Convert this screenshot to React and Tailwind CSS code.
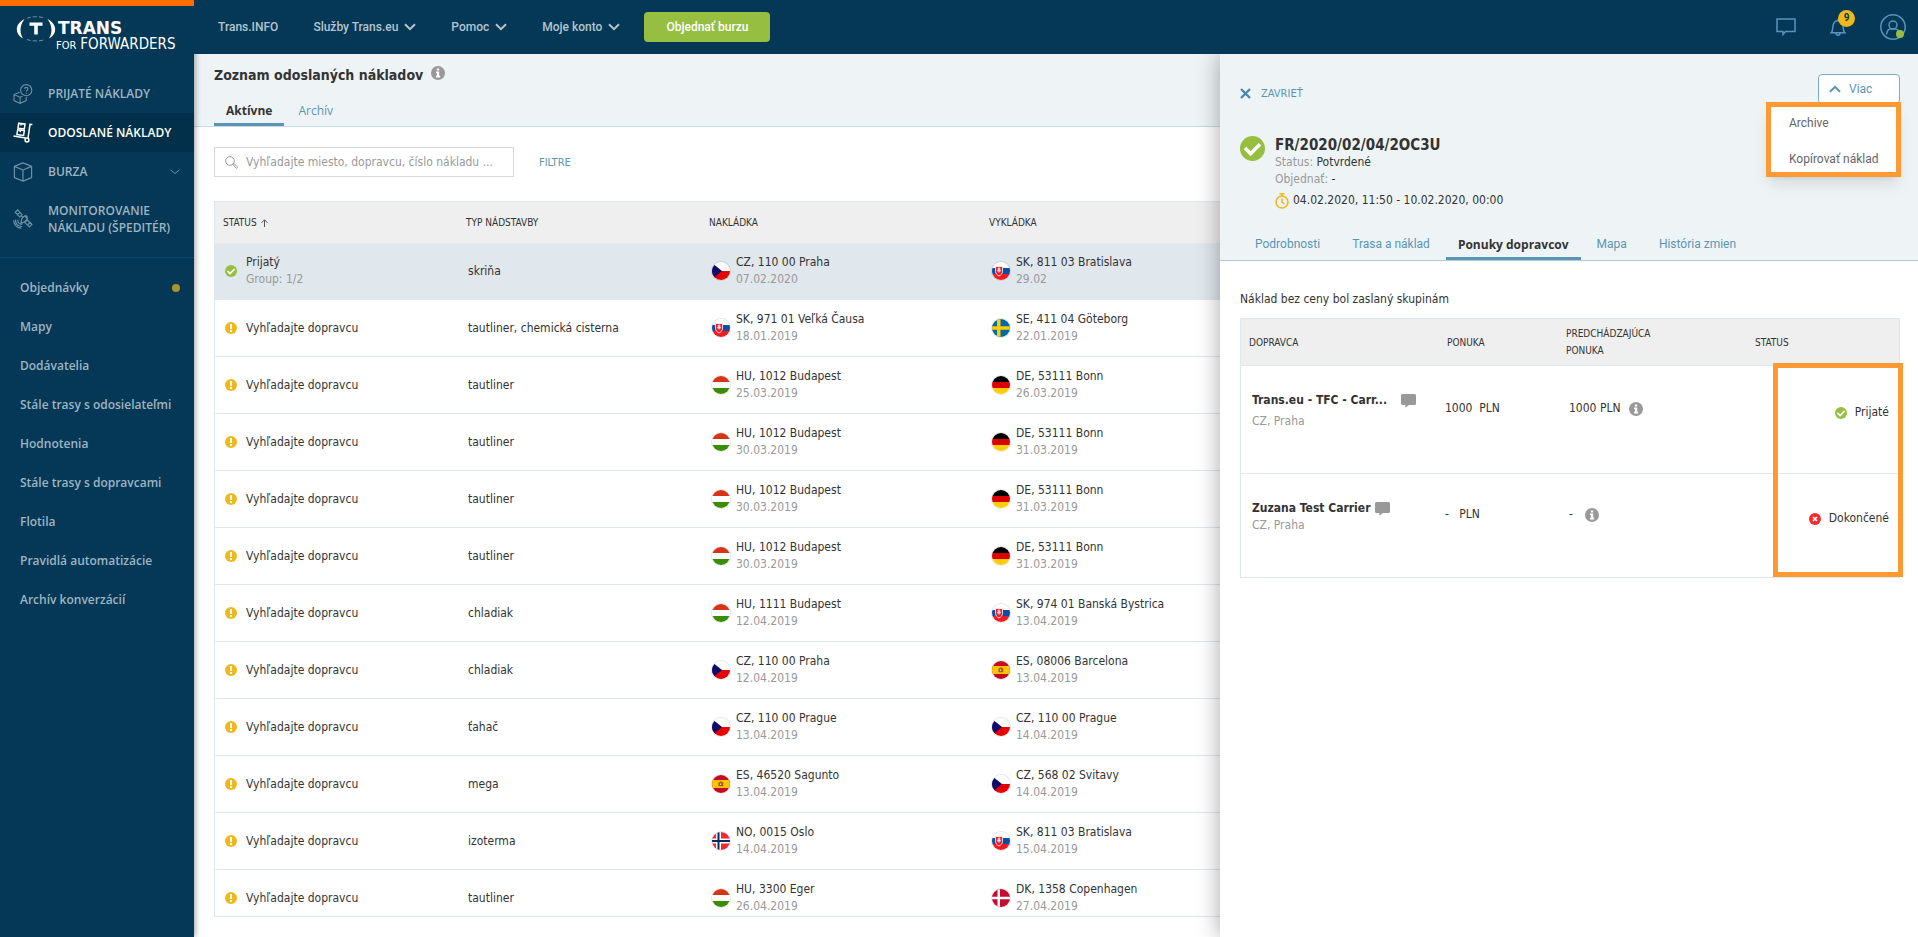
import clsx from 'clsx'

const mainMenu = [
  { label: 'PRIJATÉ NÁKLADY', icon: RequestIcon },
  { label: 'ODOSLANÉ NÁKLADY', icon: TruckIcon, active: true },
  { label: 'BURZA', icon: BoxIcon, expandable: true },
  { label: 'MONITOROVANIE NÁKLADU (ŠPEDITÉR)', icon: SatelliteIcon },
]

const subMenu = [
  { label: 'Objednávky', dot: true },
  { label: 'Mapy' },
  { label: 'Dodávatelia' },
  { label: 'Stále trasy s odosielateľmi' },
  { label: 'Hodnotenia' },
  { label: 'Stále trasy s dopravcami' },
  { label: 'Flotila' },
  { label: 'Pravidlá automatizácie' },
  { label: 'Archív konverzácií' },
]

const freights = [
  { status: 'Prijatý', group: 'Group: 1/2', body: 'skriňa', from: ['CZ', '110 00 Praha', '07.02.2020'], to: ['SK', '811 03 Bratislava', '29.02'] },
  { body: 'tautliner, chemická cisterna', from: ['SK', '971 01 Veľká Čausa', '18.01.2019'], to: ['SE', '411 04 Göteborg', '22.01.2019'] },
  { body: 'tautliner', from: ['HU', '1012 Budapest', '25.03.2019'], to: ['DE', '53111 Bonn', '26.03.2019'] },
  { body: 'tautliner', from: ['HU', '1012 Budapest', '30.03.2019'], to: ['DE', '53111 Bonn', '31.03.2019'] },
  { body: 'tautliner', from: ['HU', '1012 Budapest', '30.03.2019'], to: ['DE', '53111 Bonn', '31.03.2019'] },
  { body: 'tautliner', from: ['HU', '1012 Budapest', '30.03.2019'], to: ['DE', '53111 Bonn', '31.03.2019'] },
  { body: 'chladiak', from: ['HU', '1111 Budapest', '12.04.2019'], to: ['SK', '974 01 Banská Bystrica', '13.04.2019'] },
  { body: 'chladiak', from: ['CZ', '110 00 Praha', '12.04.2019'], to: ['ES', '08006 Barcelona', '13.04.2019'] },
  { body: 'ťahač', from: ['CZ', '110 00 Prague', '13.04.2019'], to: ['CZ', '110 00 Prague', '14.04.2019'] },
  { body: 'mega', from: ['ES', '46520 Sagunto', '13.04.2019'], to: ['CZ', '568 02 Svitavy', '14.04.2019'] },
  { body: 'izoterma', from: ['NO', '0015 Oslo', '14.04.2019'], to: ['SK', '811 03 Bratislava', '15.04.2019'] },
  { body: 'tautliner', from: ['HU', '3300 Eger', '26.04.2019'], to: ['DK', '1358 Copenhagen', '27.04.2019'] },
]

const detailTabs = ['Podrobnosti', 'Trasa a náklad', 'Ponuky dopravcov', 'Mapa', 'História zmien']

function RequestIcon() {
  return (
    <svg width="20" height="20" viewBox="0 0 20 20" fill="none" stroke="currentColor" strokeWidth="1.1">
      <circle cx="13.2" cy="6.2" r="5.6" />
      <path d="M11.6 5c0-2.2 3.3-2.2 3.3 0 0 1.2-1.6 1.3-1.6 2.7M13.3 8.7v1" />
      <path d="M6.6 8.2 1 10.6v6l6.1 2.8 6.1-2.8v-3.5M1 10.6l6.1 2.7v6M7.1 13.3l2.4-1.1" />
    </svg>
  )
}

function TruckIcon() {
  return (
    <svg width="20" height="21" viewBox="0 0 20 21" fill="none" stroke="currentColor" strokeWidth="1.5">
      <path d="M5.7 1.2 12 2l-.7 5-6.3-.8zM4.7 7.7l6.6.9-.7 4.9-6.7-.9zM8 1.6l-.2 1.9M7.4 8.2l-.2 1.9" />
      <path d="M19.4 2.6 17 2.3 15 16M.5 14l12.2 2" />
      <circle cx="14" cy="18" r="1.9" />
    </svg>
  )
}

function BoxIcon() {
  return (
    <svg width="20" height="20" viewBox="0 0 20 20" fill="none" stroke="currentColor" strokeWidth="1.2" strokeLinejoin="round">
      <path d="M10 .9 18.6 4.4v11.2L10 19.1 1.4 15.6V4.4zM1.4 4.4 10 8l8.6-3.6M10 8v11" />
    </svg>
  )
}

function SatelliteIcon() {
  return (
    <svg width="20" height="20" viewBox="0 0 20 20" fill="none" stroke="currentColor" strokeWidth="1.2">
      <path d="m2.2 3.2 2.5-2.4 4.4 4.8-2.4 2.3zM3.8 5.8l3.4-2.4M11.5 13.2l2.4-2.5 5 4.6-2.5 2.7zM14.7 16l2.3-2.6" />
      <path d="m8.6 9.8 2.9-3 3 3-2.9 3-3.6 1.6zM8.2 6.8l1.6 1.5M12.8 11.6l.9.8M12.6 6.2l2.1 2.2" />
      <path d="M4.8 10.6c-.2 3 1.6 4.7 4.4 4.7M2.5 10.6c-.3 4.3 2.4 6.9 6.6 6.9M.6 11.2c.2 4.4 3.6 7.9 7.8 8" />
    </svg>
  )
}

function InfoIcon() {
  return (
    <svg width="14" height="14" viewBox="0 0 14 14" className="shrink-0" aria-label="Info">
      <circle cx="7" cy="7" r="7" fill="#999" />
      <path d="M5.8 2.4h2.4v2H5.8zM5 5.6h3.2v4.2h1v1.6H5V9.8h1V7.2H5z" fill="#fff" />
    </svg>
  )
}

function CheckIcon({ size }) {
  return (
    <svg width={size} height={size} viewBox="0 0 24 24" className="shrink-0">
      <circle cx="12" cy="12" r="12" fill="#96be41" />
      <path d="m4.8 11.6 5.4 5.4 9-9" fill="none" stroke="#fff" strokeWidth="3.4" />
    </svg>
  )
}

function WarnIcon() {
  return (
    <svg width="12" height="12" viewBox="0 0 12 12" className="shrink-0">
      <circle cx="6" cy="6" r="6" fill="#f0b81b" />
      <path d="M5 2h2v5H5zM5 8h2v2H5z" fill="#fff" />
    </svg>
  )
}

function CrossIcon() {
  return (
    <svg width="12" height="12" viewBox="0 0 12 12" className="shrink-0">
      <circle cx="6" cy="6" r="6" fill="#f9292d" />
      <path d="m4 4 4 4m0-4L4 8" stroke="#fff" strokeWidth="1.7" />
    </svg>
  )
}

function ChatIcon() {
  return (
    <svg width="15" height="14" viewBox="0 0 15 14" className="shrink-0" fill="#999">
      <path d="M1.5 0h12A1.5 1.5 0 0 1 15 1.5v8a1.5 1.5 0 0 1-1.5 1.5H8l-3.6 2.7V11H1.5A1.5 1.5 0 0 1 0 9.5v-8A1.5 1.5 0 0 1 1.5 0z" />
    </svg>
  )
}

function Chevron({ up }) {
  return (
    <svg width="12" height="8" viewBox="0 0 12 8" fill="none" stroke="currentColor" strokeWidth="2" className={clsx(up && 'rotate-180')}>
      <path d="m1 1.2 5 5 5-5" />
    </svg>
  )
}

const flagArt = {
  CZ: (
    <>
      <path d="M0 0h18v9H0z" fill="#fff" />
      <path d="M0 9h18v9H0z" fill="#e60000" />
      <path d="M0 1v16l10-8z" fill="#0c0c6b" />
    </>
  ),
  SK: (
    <>
      <path d="M0 0h18v6H0z" fill="#fff" />
      <path d="M0 6h18v6H0z" fill="#0b4ea2" />
      <path d="M0 12h18v6H0z" fill="#ee1c25" />
      <path d="M3.5 4.5h7v5c0 2-1.5 3.5-3.5 4.5-2-1-3.5-2.500-3.500-4.500z" fill="#ee1c25" stroke="#fff" strokeWidth=".8" />
      <path d="M7 5.5v5M5.5 7h3M5 8.8h4" stroke="#fff" />
    </>
  ),
  SE: (
    <>
      <path d="M0 0h18v18H0z" fill="#006aa7" />
      <path d="M5 0h3.5v18H5zM0 7.2h18v3.6H0z" fill="#fecc00" />
    </>
  ),
  HU: (
    <>
      <path d="M0 0h18v6H0z" fill="#d43516" />
      <path d="M0 6h18v6H0z" fill="#fff" />
      <path d="M0 12h18v6H0z" fill="#388d00" />
    </>
  ),
  DE: (
    <>
      <path d="M0 0h18v6H0z" fill="#000" />
      <path d="M0 6h18v6H0z" fill="#d00" />
      <path d="M0 12h18v6H0z" fill="#ffce00" />
    </>
  ),
  ES: (
    <>
      <path d="M0 0h18v18H0z" fill="#c60b1e" />
      <path d="M0 5h18v8H0z" fill="#ffc400" />
      <path d="M6.5 7.5 9 6.2l2.3 1.3v3.8H6.5z" fill="#ad5a2b" />
      <path d="M8 8.5h1.200V10H8z" fill="#f3d9a0" />
    </>
  ),
  NO: (
    <>
      <path d="M0 0h18v18H0z" fill="#ef2b2d" />
      <path d="M4 0h5v18H4zM0 6.5h18v5H0z" fill="#fff" />
      <path d="M5.5 0h2v18h-2zM0 8h18v2H0z" fill="#002868" />
    </>
  ),
  DK: (
    <>
      <path d="M0 0h18v18H0z" fill="#c60c30" />
      <path d="M5.5 0H8v18H5.500zM0 7.8h18v2.4H0z" fill="#fff" />
    </>
  ),
}

function Flag({ code }) {
  return (
    <svg width="18" height="18" viewBox="0 0 18 18" className="shrink-0 rounded-full ring-1 ring-black/10">
      {flagArt[code]}
    </svg>
  )
}

function Place({ place }) {
  const [code, address, date] = place
  return (
    <div className="flex items-center gap-1.5 pl-px">
      <Flag code={code} />
      <div>
        <div>{code}, {address}</div>
        <div className="text-[#999]">{date}</div>
      </div>
    </div>
  )
}

function Logo() {
  return (
    <a href="#" className="mt-2.5 ml-4 flex h-[58px] items-start font-normal text-white">
      <svg width="40" height="26" viewBox="0 0 40 26" fill="#fff" className="shrink-0">
        <path d="M8.5 3C-1.5 8-1.5 18 7 22.600 3.5 17 3.5 9.5 8.5 3z" />
        <path d="M31.5 3c10 5 10 15 1.5 19.600C36.5 17 36.5 9.5 31.5 3z" />
        <path d="M11 2.200C16 .2 24 .2 29 2.200M11 23.600c5 1.800 13 1.800 18 0" fill="none" stroke="#8aa5b6" strokeWidth=".8" strokeDasharray="4 2" />
        <path d="M13.5 6.5h13v3.2h-4.700v8.800h-3.600V9.700h-4.700z" />
      </svg>
      <div className="pt-[3px] font-['DejaVu_Sans']">
        <div className="pl-0.5 text-[17px] leading-[18px] font-bold">TRANS</div>
        <div className="flex items-baseline gap-1 font-['DejaVu_Sans_Condensed'] leading-[15px]">
          <span className="text-[11px]">FOR</span>
          <span className="text-[15px]">FORWARDERS</span>
        </div>
      </div>
    </a>
  )
}

function Sidebar() {
  return (
    <aside className="z-10 w-[194px] shrink-0 border-t-6 border-[#ff6c00] bg-[#043856] font-['Open_Sans'] text-xs font-semibold text-[#9fb4c1] shadow-[1px_0_6px_rgba(0,0,0,0.4)]">
      <Logo />
      <nav className="border-b border-[#0b4a6e] pb-2.5 leading-[17px]">
        {mainMenu.map(({ label, icon: Icon, active, expandable }) => (
          <a
            key={label}
            href="#"
            className={clsx('flex min-h-[39px] items-center gap-[15px] py-[9px] pl-[13px]', active && 'bg-[#022f4a] text-white')}
          >
            <span className={clsx('shrink-0', !active && 'text-[#6d8fa4]')}><Icon /></span>
            <span className="flex-1 py-0.5">{label}</span>
            {expandable && (
              <svg width="10" height="6" viewBox="0 0 10 6" fill="none" stroke="#6d8fa4" className="mr-3.5">
                <path d="m.5.8 4.5 3.7L9.5.8" />
              </svg>
            )}
          </a>
        ))}
      </nav>
      <nav className="pt-2.5">
        {subMenu.map(({ label, dot }) => (
          <a key={label} href="#" className="flex h-[39px] items-center justify-between pr-3.5 pl-5">
            {label}
            {dot && <span className="size-2 rounded-full bg-[#a8962c]" />}
          </a>
        ))}
      </nav>
    </aside>
  )
}

function TopBar() {
  return (
    <header className="z-20 flex h-[54px] shrink-0 items-center bg-[#043856] pr-3 pl-6 font-['Roboto'] text-xs font-medium text-[#b4c4ce]">
      <nav className="flex items-center gap-[35px]">
        <a href="#">Trans.INFO</a>
        {['Služby Trans.eu', 'Pomoc', 'Moje konto'].map((label) => (
          <button key={label} className="flex items-center gap-1.5">
            {label}
            <Chevron />
          </button>
        ))}
      </nav>
      <button className="ml-6 h-[30px] w-[126px] rounded bg-[#96be41] text-white">Objednať burzu</button>
      <div className="ml-auto flex items-center gap-[34px] text-[#5a94ba]">
        <button aria-label="Správy">
          <svg width="20" height="18" viewBox="0 0 20 18" fill="none" stroke="currentColor" strokeWidth="1.5">
            <path d="M1 1h18v12.5H9.5L7 16.5v-3H1z" />
          </svg>
        </button>
        <button aria-label="Upozornenia" className="relative">
          <svg width="16" height="19" viewBox="0 0 16 19" fill="none" stroke="currentColor" strokeWidth="1.5">
            <path d="M1 14.8c2-1.5 1.5-4 2-7 .5-3 2-5 5-5s4.5 2 5 5c.5 3 0 5.5 2 7zM6 15c0 3 4 3 4 0M8 2.5V1" />
          </svg>
          <span className="absolute -top-2 left-2 flex size-[17px] items-center justify-center rounded-full bg-[#f0b81b] text-[10px] font-bold text-[#043856]">9</span>
        </button>
        <button aria-label="Profil" className="relative">
          <svg width="26" height="26" viewBox="0 0 26 26" fill="none" stroke="currentColor" strokeWidth="1.5">
            <circle cx="13" cy="13" r="12.2" />
            <circle cx="13" cy="11" r="4" />
            <path d="M6.5 20.5c.5-3.5 2.5-5.5 4-5.5h5c1.5 0 3.5 2 4 5.5" />
          </svg>
          <span className="absolute right-0.5 bottom-0.5 size-2 rounded-full bg-[#96be41]" />
        </button>
      </div>
    </header>
  )
}

function FreightList() {
  return (
    <main className="flex min-w-0 flex-1 flex-col overflow-hidden">
      <div className="border-b border-[#c6dbe6] bg-[#eef4f6] pt-3 pl-5">
        <div className="flex items-start gap-2">
          <h1 className="text-sm leading-[18px] font-bold">Zoznam odoslaných nákladov</h1>
          <InfoIcon />
        </div>
        <div className="mt-3.5 flex gap-0.5 font-['Open_Sans']">
          <a href="#" className="border-b-3 border-[#5b94b5] px-3 py-1 font-bold">Aktívne</a>
          <a href="#" className="px-3 py-1 text-[#5b94b5]">Archív</a>
        </div>
      </div>

      <div className="flex items-center gap-[25px] pt-5 pb-6 pl-5">
        <label className="flex h-[30px] w-[300px] items-center gap-2 border border-[#d8d8d8] pl-2.5">
          <svg width="13" height="13" viewBox="0 0 13 13" fill="none" stroke="#999">
            <circle cx="5" cy="5" r="4.3" />
            <path d="m8 8.5 1.2-.8 3 3a.9.9 0 0 1-1.3 1.3z" />
          </svg>
          <input
            type="text"
            aria-label="Vyhľadávanie"
            placeholder="Vyhľadajte miesto, dopravcu, číslo nákladu ..."
            className="min-w-0 flex-1 outline-none placeholder:text-[#999]"
          />
        </label>
        <a href="#" className="text-[11px] text-[#5b94b5]">FILTRE</a>
      </div>

      <div className="mb-5 ml-5 min-h-0 flex-1 overflow-hidden border-y border-l border-[#e0e7ed]">
        <table className="w-full table-fixed border-separate border-spacing-0 text-left">
          <colgroup>
            <col className="w-[243px]" />
            <col className="w-[243px]" />
            <col className="w-[280px]" />
            <col />
          </colgroup>
          <thead>
            <tr className="h-[41px] bg-[#efefef] text-[10px]">
              <th className="pl-2 font-normal">
                <span className="flex items-center gap-1">
                  STATUS
                  <svg width="7" height="8" viewBox="0 0 7 8" fill="none" stroke="#555">
                    <path d="M3.5 8V1M.5 3.800l3-3 3 3" />
                  </svg>
                </span>
              </th>
              <th className="pl-2 font-normal">TYP NÁDSTAVBY</th>
              <th className="pl-2 font-normal">NAKLÁDKA</th>
              <th className="pl-2 font-normal">VYKLÁDKA</th>
            </tr>
          </thead>
          <tbody>
            {freights.map((row, i) => (
              <tr key={i} className={clsx('h-[57px] *:border-b *:border-[#e0e7ed] *:pl-2.5', row.group && 'bg-[#e0e7ed]')}>
                <td>
                  <div className="flex items-center gap-[9px]">
                    {row.group ? <CheckIcon size={12} /> : <WarnIcon />}
                    <div>
                      <div>{row.status || 'Vyhľadajte dopravcu'}</div>
                      {row.group && <div className="text-[#999]">{row.group}</div>}
                    </div>
                  </div>
                </td>
                <td>{row.body}</td>
                <td><Place place={row.from} /></td>
                <td><Place place={row.to} /></td>
              </tr>
            ))}
          </tbody>
        </table>
      </div>
    </main>
  )
}

function MoreMenu() {
  return (
    <div className="relative font-['Roboto']">
      <button className="flex h-[30px] w-[82px] items-center gap-2 rounded-sm border border-[#7fabc6] bg-white pl-2.5 text-[#5b94b5]">
        <Chevron up />
        Viac
      </button>
      <ul className="absolute top-7 -right-px flex h-[75px] w-[135px] flex-col justify-between border-5 border-[#ff9933] bg-white pt-2 pb-1 pl-[18px] whitespace-nowrap text-[#666] shadow-lg">
        <li><a href="#">Archive</a></li>
        <li><a href="#">Kopírovať náklad</a></li>
      </ul>
    </div>
  )
}

function OffersTable() {
  return (
    <div className="relative">
      <table className="w-full table-fixed border-separate border-spacing-0 border border-[#e0e7ed] text-left">
        <colgroup>
          <col className="w-[198px]" />
          <col className="w-[119px]" />
          <col className="w-[189px]" />
          <col />
        </colgroup>
        <thead>
          <tr className="h-[47px] bg-[#efefef] text-[10px] *:border-b *:border-[#e0e7ed] *:pl-2 *:font-normal">
            <th>DOPRAVCA</th>
            <th>PONUKA</th>
            <th className="pr-16">PREDCHÁDZAJÚCA PONUKA</th>
            <th>STATUS</th>
          </tr>
        </thead>
        <tbody className="align-top">
          <tr className="h-[108px] *:border-b *:border-[#e0e7ed]">
            <td className="pt-[26px] pl-[11px]">
              <div className="mb-1 flex items-center justify-between pr-[23px] whitespace-nowrap">
                <b>Trans.eu - TFC - Carr...</b>
                <ChatIcon />
              </div>
              <div className="text-[#999]">CZ, Praha</div>
            </td>
            <td className="pt-[34px] pl-1.5">1000 &nbsp;PLN</td>
            <td className="pt-[34px] pl-[11px]">
              <div className="flex items-center gap-2">1000 PLN <InfoIcon /></div>
            </td>
            <td className="pt-[38px] pr-2.5">
              <div className="flex items-center justify-end gap-2"><CheckIcon size={12} /> Prijaté</div>
            </td>
          </tr>
          <tr className="h-[103px]">
            <td className="pt-[26px] pl-[11px]">
              <div className="flex items-center gap-[5px]">
                <b>Zuzana Test Carrier</b>
                <ChatIcon />
              </div>
              <div className="text-[#999]">CZ, Praha</div>
            </td>
            <td className="pt-8 pl-1.5">- &nbsp; PLN</td>
            <td className="pt-8 pl-[11px]">
              <div className="flex items-center gap-3">- <InfoIcon /></div>
            </td>
            <td className="pt-9 pr-2.5">
              <div className="flex items-center justify-end gap-2"><CrossIcon /> Dokončené</div>
            </td>
          </tr>
        </tbody>
      </table>
      <div className="pointer-events-none absolute top-[45px] -right-[3px] bottom-px w-[130px] border-5 border-[#ff9933]" />
    </div>
  )
}

function DetailPanel() {
  return (
    <section className="z-10 w-[698px] shrink-0 bg-white shadow-[0_0_22px_rgba(0,0,0,0.35)]">
      <div className="border-b border-[#b0ccdb] bg-[#eef4f6]">
        <div className="flex items-start justify-between pt-5 pr-[18px] pl-5">
          <button className="flex items-center gap-2.5 pt-[11px] pb-2.5 text-[11px] text-[#5b94b5]">
            <svg width="11" height="11" viewBox="0 0 11 11" stroke="#4a88ae" strokeWidth="2.4">
              <path d="m1 1 9 9m0-9-9 9" />
            </svg>
            ZAVRIEŤ
          </button>
          <MoreMenu />
        </div>
        <div className="flex items-start gap-2.5 pt-6 pl-5">
          <CheckIcon size={25} />
          <div className="pt-px">
            <h2 className="text-[15px] leading-[17px] font-bold">FR/2020/02/04/2OC3U</h2>
            <div><span className="text-[#999]">Status:</span> Potvrdené</div>
            <div><span className="text-[#999]">Objednať:</span> -</div>
            <div className="mt-1 flex items-center gap-1">
              <svg width="14" height="16" viewBox="0 0 14 16" fill="none" stroke="#f0b81b" strokeWidth="1.6">
                <circle cx="7" cy="9" r="6" />
                <path d="M7 5.5V9l2.5 2M4.5.8h5M7 .8V3" />
              </svg>
              04.02.2020, 11:50 - 10.02.2020, 00:00
            </div>
          </div>
        </div>
        <div className="flex pt-[23px] pl-[19px]">
          {detailTabs.map((tab) => (
            <a
              key={tab}
              href="#"
              className={clsx(
                'border-b-3 py-1',
                tab === 'Ponuky dopravcov'
                  ? "border-[#5b94b5] px-3 font-['Open_Sans'] font-bold"
                  : "border-transparent px-4 font-['Roboto'] text-[#5b94b5]",
              )}
            >
              {tab}
            </a>
          ))}
        </div>
      </div>
      <div className="pt-[30px] pr-[18px] pl-5">
        <p className="mb-2.5">Náklad bez ceny bol zaslaný skupinám</p>
        <OffersTable />
      </div>
    </section>
  )
}

export default function App() {
  return (
    <div className="flex h-screen overflow-hidden bg-white font-['DejaVu_Sans_Condensed','DejaVu_Sans',sans-serif] text-xs leading-[17px] text-[#333]">
      <Sidebar />
      <div className="flex min-w-0 flex-1 flex-col">
        <TopBar />
        <div className="flex min-h-0 flex-1">
          <FreightList />
          <DetailPanel />
        </div>
      </div>
    </div>
  )
}
